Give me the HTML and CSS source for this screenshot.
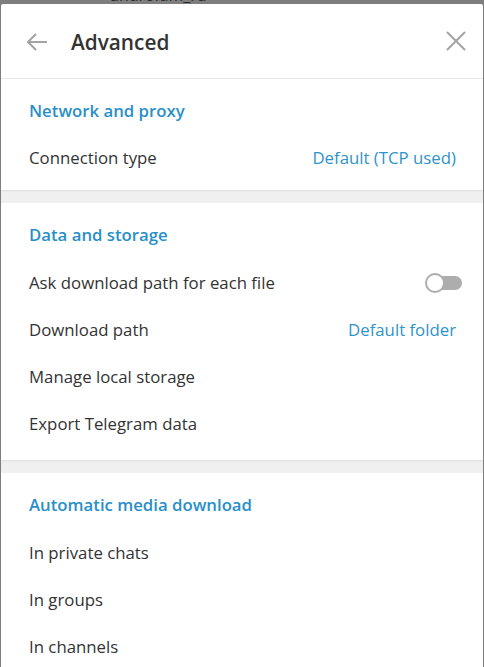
FILE: index.html
```html
<!DOCTYPE html>
<html>
<head>
<meta charset="utf-8">
<link rel="stylesheet" href="styles.css">
</head>
<body>
<div class="backdrop-text">androidm_ru</div>
<div class="modal">
  <div class="header">
    <svg class="back" width="24" height="24" viewBox="0 0 24 24"><path d="M22 12H3M11 4l-8 8 8 8" fill="none" stroke="#a3a3a3" stroke-width="2"/></svg>
    <div class="title">Advanced</div>
    <svg class="close" width="20" height="20" viewBox="0 0 20 20"><path d="M1 1L19 19M19 1L1 19" fill="none" stroke="#a3a3a3" stroke-width="2"/></svg>
  </div>
  <div class="section s1">
    <div class="sec-title">Network and proxy</div>
    <div class="row"><span>Connection type</span><span class="value">Default (TCP used)</span></div>
  </div>
  <div class="gap"></div>
  <div class="section s2">
    <div class="sec-title">Data and storage</div>
    <div class="row"><span>Ask download path for each file</span><span class="toggle"><span class="knob"></span></span></div>
    <div class="row"><span>Download path</span><span class="value">Default folder</span></div>
    <div class="row"><span>Manage local storage</span></div>
    <div class="row"><span>Export Telegram data</span></div>
  </div>
  <div class="gap"></div>
  <div class="section s3">
    <div class="sec-title">Automatic media download</div>
    <div class="row"><span>In private chats</span></div>
    <div class="row"><span>In groups</span></div>
    <div class="row"><span>In channels</span></div>
  </div>
</div>
</body>
</html>
```
FILE: styles.css
```css
html, body {
  margin: 0;
  padding: 0;
  height: 667px;
  overflow: hidden;
}
body {
  background: #7e7e7e;
  font-family: "Open Sans", sans-serif;
  color: #333333;
  position: relative;
}
.backdrop-text {
  position: absolute;
  left: 110px;
  top: -16px;
  font-size: 16px;
  color: #2a2a2a;
}
.modal {
  position: relative;
  margin: 4px 0 0 1px;
  width: 482px;
  height: 663px;
  background: #ffffff;
  border-radius: 2px 2px 0 0;
  overflow: hidden;
}
.header {
  height: 75px;
  border-bottom: 1px solid #e8e8e8;
  display: flex;
  align-items: center;
  padding: 0 16px 0 24px;
  box-sizing: border-box;
}
.back {
  margin-top: 2px;
}
.title {
  margin-left: 22px;
  font-size: 20.8px;
  font-weight: 600;
  color: #333;
  flex: 1;
  margin-top: 2px;
}
.close {
  margin-right: 1px;
}
.section {
  padding: 10px 27px 0 28px;
}
.s1 { padding-bottom: 8px; }
.s2 { padding-bottom: 13px; }
.sec-title {
  height: 46px;
  box-sizing: border-box;
  padding-bottom: 3px;
  display: flex;
  align-items: center;
  color: #2a8fc8;
  font-size: 16.75px;
  font-weight: 600;
}
.row {
  height: 47px;
  display: flex;
  align-items: center;
  justify-content: space-between;
  font-size: 16.8px;
}
.s1 .row {
  padding-bottom: 2px;
  box-sizing: border-box;
}
.value {
  color: #3093cb;
}
.gap {
  height: 13px;
  background: #f0f0f0;
  box-shadow: inset 0 2px 2px -1px rgba(0,0,0,0.08);
}
.toggle {
  position: relative;
  width: 36px;
  height: 14px;
  border-radius: 7px;
  background: #adadad;
  margin-right: -6px;
}
.knob {
  position: absolute;
  left: -1px;
  top: -3px;
  width: 16px;
  height: 16px;
  border-radius: 50%;
  background: #fff;
  border: 2px solid #adadad;
  box-sizing: content-box;
}
```
